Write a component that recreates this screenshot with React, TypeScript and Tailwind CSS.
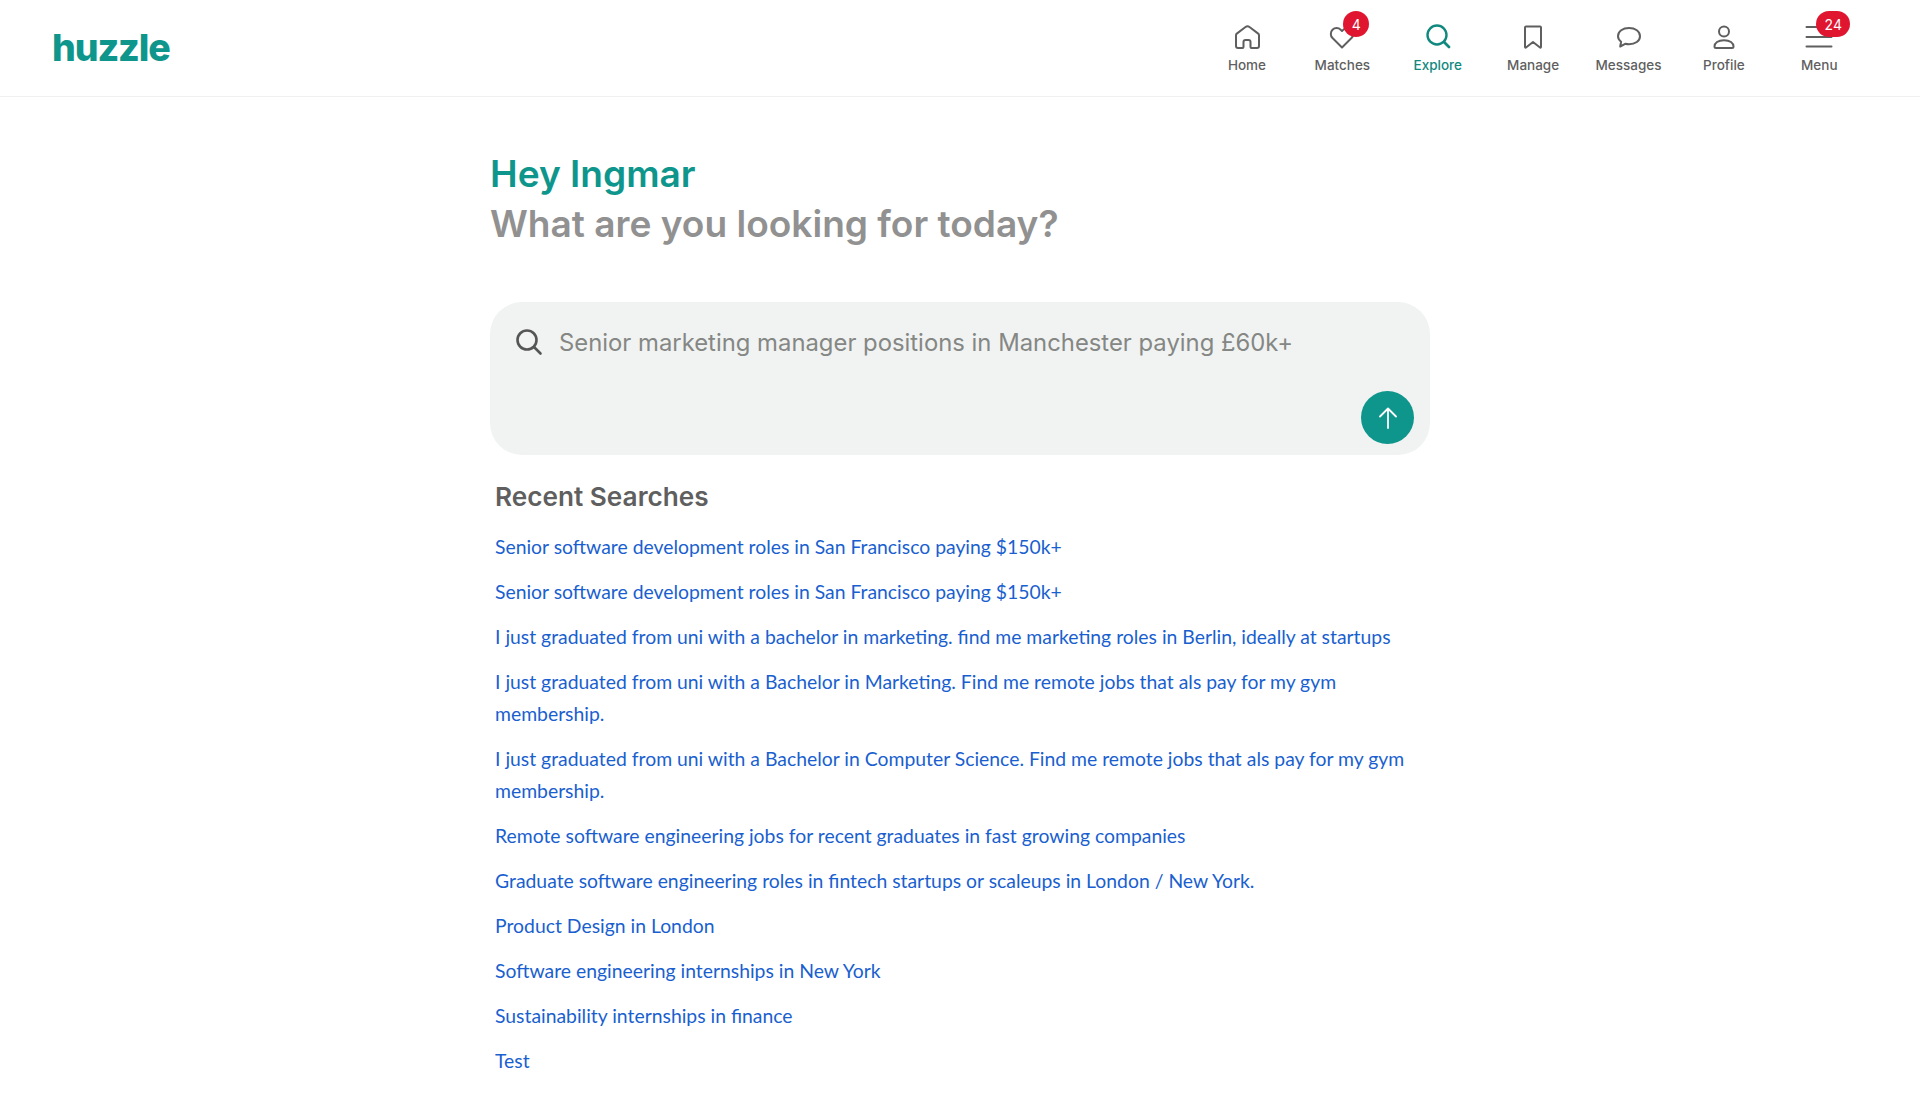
import type { ReactNode } from 'react';

const stroke = {
  fill: 'none',
  stroke: 'currentColor',
  strokeWidth: 2,
  strokeLinecap: 'round' as const,
  strokeLinejoin: 'round' as const,
};

const Icon = ({ children }: { children: ReactNode }) => (
  <svg width="32" height="32" viewBox="0 0 32 32" {...stroke}>
    {children}
  </svg>
);

const navItems: { label: string; icon: ReactNode; badge?: string; active?: boolean }[] = [
  {
    label: 'Home',
    icon: (
      <Icon>
        <path d="M14.5 6 5.8 12.6A2 2 0 0 0 5 14.2V25a2 2 0 0 0 2 2h4.5a1 1 0 0 0 1-1v-5a2 2 0 0 1 2-2h3a2 2 0 0 1 2 2v5a1 1 0 0 0 1 1H26a2 2 0 0 0 2-2V14.2a2 2 0 0 0-.8-1.6L18.5 6a3.2 3.2 0 0 0-4 0Z" />
      </Icon>
    ),
  },
  {
    label: 'Matches',
    badge: '4',
    icon: (
      <Icon>
        <path d="M16 26.5 6.5 17a5.8 5.8 0 0 1 0-8.2 5.8 5.8 0 0 1 8.2 0L16 10l1.3-1.2a5.8 5.8 0 0 1 8.2 0 5.8 5.8 0 0 1 0 8.2Z" />
      </Icon>
    ),
  },
  {
    label: 'Explore',
    active: true,
    icon: (
      <Icon>
        <circle cx="15" cy="14" r="9.5" strokeWidth="2.4" />
        <path d="m22 21 5 5" strokeWidth="2.8" />
      </Icon>
    ),
  },
  {
    label: 'Manage',
    icon: (
      <Icon>
        <path d="M9 5.5h14a1 1 0 0 1 1 1V26a.6.6 0 0 1-1 .5l-7-5.5-7 5.5a.6.6 0 0 1-1-.5V6.5a1 1 0 0 1 1-1Z" />
      </Icon>
    ),
  },
  {
    label: 'Messages',
    icon: (
      <Icon>
        <path d="M16 7c6.3 0 11 3.4 11 8.2 0 4.7-4.8 8.1-11 8.1-1.3 0-2.6-.2-3.8-.5l-5 2.7.9-4.8C6 19 5 17.2 5 15.2 5 10.4 9.7 7 16 7Z" />
      </Icon>
    ),
  },
  {
    label: 'Profile',
    icon: (
      <Icon>
        <circle cx="16" cy="10.5" r="5" />
        <path d="M8 27a1.5 1.5 0 0 1-1.5-1.500c0-3.500 3.500-6.300 9.500-6.300s9.500 2.800 9.500 6.300A1.500 1.500 0 0 1 24 27Z" />
      </Icon>
    ),
  },
  {
    label: 'Menu',
    badge: '24',
    icon: (
      <Icon>
        <path d="M3.5 6h25M3.5 16h25M3.5 25.5h25" />
      </Icon>
    ),
  },
];

const recentSearches = [
  'Senior software development roles in San Francisco paying $150k+',
  'Senior software development roles in San Francisco paying $150k+',
  'I just graduated from uni with a bachelor in marketing. find me marketing roles in Berlin, ideally at startups',
  'I just graduated from uni with a Bachelor in Marketing. Find me remote jobs that als pay for my gym membership.',
  'I just graduated from uni with a Bachelor in Computer Science. Find me remote jobs that als pay for my gym membership.',
  'Remote software engineering jobs for recent graduates in fast growing companies',
  'Graduate software engineering roles in fintech startups or scaleups in London / New York.',
  'Product Design in London',
  'Software engineering internships in New York',
  'Sustainability internships in finance',
  'Test',
];

export default function App() {
  return (
    <div className="min-h-[1112px] bg-white font-['Inter',sans-serif]">
      <header className="flex h-[97px] items-center justify-between border-b border-[#f0f0f0] pl-[52px] pr-[53px]">
        <span className="text-[37.5px] font-extrabold leading-none tracking-[-0.03em] text-[#0f968c]">huzzle</span>
        <nav className="flex">
          {navItems.map((item) => (
            <div
              key={item.label}
              className={`relative flex w-[95.4px] flex-col items-center ${item.active ? 'text-[#12897f]' : 'text-[#5f5f5f]'}`}
            >
              <div className="relative">
                {item.icon}
                {item.badge && (
                  <span
                    className={`absolute top-[-10px] flex h-[26px] min-w-[26px] items-center justify-center rounded-full bg-[#e0152f] px-[5px] text-[14px] text-white ${item.badge.length > 1 ? 'left-[calc(50%-3px)] w-[34px]' : 'left-[calc(50%+1px)]'}`}
                  >
                    {item.badge}
                  </span>
                )}
              </div>
              <span className="mt-[2px] text-[13.5px] font-medium leading-[20px]">{item.label}</span>
            </div>
          ))}
        </nav>
      </header>

      <main className="mx-auto w-[940px] pt-[52px]">
        <h1 className="text-[37.1px] font-semibold leading-[50px]">
          <span className="block text-[#0f968c]">Hey Ingmar</span>
          <span className="block text-[#919191]">What are you looking for today?</span>
        </h1>

        <div className="relative mt-[53px] h-[153px] rounded-[32px] bg-[#f1f3f2]">
          <div className="flex items-center pl-[25px] pr-[24px] pt-[22px]">
            <svg width="28" height="28" viewBox="0 0 28 28" className="shrink-0 text-[#555]" {...stroke} strokeWidth="2.6">
              <circle cx="12" cy="12" r="9.5" />
              <path d="m19.5 19.5 6 6" />
            </svg>
            <input
              readOnly
              placeholder="Senior marketing manager positions in Manchester paying £60k+"
              className="ml-[16px] h-[36px] w-full bg-transparent text-[23.85px] outline-none placeholder:text-[#858784]"
            />
          </div>
          <button className="absolute bottom-[11px] right-[16px] flex h-[53px] w-[53px] items-center justify-center rounded-full bg-[#0f968c] text-white">
            <svg width="20" height="22" viewBox="0 0 20 22" {...stroke} strokeWidth="1.8">
              <path d="M10 21V1.5M2 9.5l8-8 8 8" />
            </svg>
          </button>
        </div>

        <section className="px-[5px] pt-[24px]">
          <h2 className="text-[26.2px] font-semibold leading-[36px] text-[#5f5f5f]">Recent Searches</h2>
          <ul className="mt-[16px] flex flex-col gap-[13px] font-['Lato',sans-serif] text-[19.37px] leading-[32px] text-[#1a5fcf]">
            {recentSearches.map((search, idx) => (
              <li key={idx}>{search}</li>
            ))}
          </ul>
        </section>
      </main>
    </div>
  );
}
